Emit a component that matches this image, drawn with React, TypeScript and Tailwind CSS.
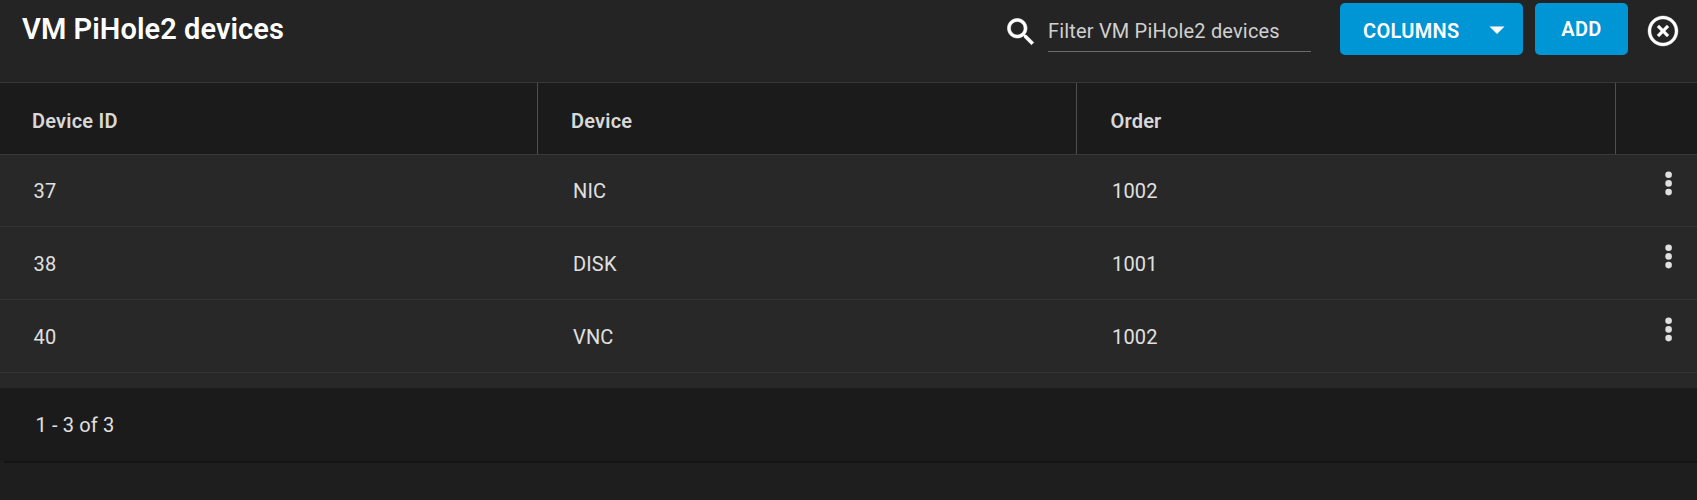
import React from 'react';

type Device = { id: string; device: string; order: string };

const devices: Device[] = [
  { id: '37', device: 'NIC', order: '1002' },
  { id: '38', device: 'DISK', order: '1001' },
  { id: '40', device: 'VNC', order: '1002' },
];

function SearchIcon() {
  return (
    <svg viewBox="0 0 24 24" className="mt-[14px] h-9 w-9 shrink-0 fill-white stroke-white stroke-[0.4]">
      <path d="M15.5 14h-.79l-.28-.27C15.41 12.59 16 11.11 16 9.5 16 5.91 13.09 3 9.5 3S3 5.91 3 9.5 5.91 16 9.5 16c1.61 0 3.09-.59 4.23-1.57l.27.28v.79l5 4.99L20.49 19l-4.99-5zm-6 0C7.01 14 5 11.99 5 9.5S7.01 5 9.5 5 14 7.01 14 9.5 11.99 14 9.5 14z" />
    </svg>
  );
}

function CloseIcon() {
  return (
    <svg viewBox="0 0 24 24" className="h-9 w-9 fill-white stroke-white stroke-[0.25]">
      <path d="M12,20C7.59,20 4,16.41 4,12C4,7.59 7.59,4 12,4C16.41,4 20,7.59 20,12C20,16.41 16.41,20 12,20M12,2C6.47,2 2,6.47 2,12C2,17.53 6.47,22 12,22C17.53,22 22,17.53 22,12C22,6.47 17.53,2 12,2M14.59,8L12,10.59L9.41,8L8,9.41L10.59,12L8,14.59L9.41,16L12,13.41L14.59,16L16,14.59L13.41,12L16,9.41L14.59,8Z" />
    </svg>
  );
}

function DotsIcon() {
  return (
    <svg viewBox="0 0 8 26" className="h-[26px] w-2 fill-[#e0e0e0]">
      <circle cx="3.6" cy="3.7" r="3.3" />
      <circle cx="3.6" cy="12.4" r="3.3" />
      <circle cx="3.6" cy="21.1" r="3.3" />
    </svg>
  );
}

function Toolbar() {
  return (
    <header className="flex h-[82px] items-start bg-[#242424]">
      <h1 className="ml-[22px] mt-[9px] flex-1 text-[29px] font-semibold leading-10 tracking-[0.06px] text-white">
        VM PiHole2 devices
      </h1>
      <SearchIcon />
      <div className="ml-[9px] mt-3 flex h-10 w-[263px] items-start border-b border-[#6b6b6b] pt-[7px]">
        <span className="whitespace-nowrap text-[20px] leading-6 tracking-[0.18px] text-[#d0d0d0]">
          Filter VM PiHole2 devices
        </span>
      </div>
      <button className="ml-[29px] mt-[3px] flex h-[52px] w-[183px] items-start rounded-[5px] bg-[#0095d5] pl-[23px] text-[20px] font-semibold text-white">
        <span className="mt-4 w-[96px] text-left leading-6 tracking-[0.3px]">COLUMNS</span>
        <svg viewBox="0 0 24 24" className="ml-[19.5px] mt-2 h-9 w-9 shrink-0 fill-current">
          <path d="M7 10.3l5 5 5-5z" />
        </svg>
      </button>
      <button className="ml-3 mt-[3px] flex h-[52px] w-[93px] justify-center rounded-[5px] bg-[#0095d5] pt-[14px] text-[20px] font-semibold leading-6 tracking-[0.3px] text-white">
        ADD
      </button>
      <button aria-label="Close" className="ml-[17px] mr-4 mt-[12.5px]">
        <CloseIcon />
      </button>
    </header>
  );
}

export default function App() {
  return (
    <div className="h-[500px] w-[1697px] overflow-hidden bg-[#1e1e1e] font-['Roboto',sans-serif]">
      <Toolbar />
      <div className="grid h-[73px] grid-cols-[538px_539px_539px_1fr] border-y border-[#383838] bg-[#1b1b1b] text-[20px] font-semibold leading-6 tracking-[0.2px] text-[#d8d8d8]">
        <div className="border-r border-[#4f4f4f] pl-8 pt-[26px]">Device ID</div>
        <div className="border-r border-[#4f4f4f] pl-[33px] pt-[26px]">Device</div>
        <div className="border-r border-[#4f4f4f] pl-[33.5px] pt-[26px]">Order</div>
        <div />
      </div>
      <div className="h-[233px] bg-[#282828] text-[20px] leading-6 text-[#e0e0e0]">
        {devices.map((d) => (
          <div
            key={d.id}
            className="grid h-[73px] grid-cols-[538px_539px_539px_1fr] border-b border-[#333333] first:h-[72px] [&>button]:mt-[17px] [&>div]:pt-[25px] [&:first-child>button]:mt-4 [&:first-child>div]:pt-6"
          >
            <div className="pl-[33.5px] tracking-[0.15px]">{d.id}</div>
            <div className="pl-[35px] tracking-[0.15px]">{d.device}</div>
            <div className="pl-[35px] tracking-[0.15px]">{d.order}</div>
            <button className="ml-[48.5px] w-2 self-start">
              <DotsIcon />
            </button>
          </div>
        ))}
      </div>
      <footer className="h-[73px] bg-[#1b1b1b] pl-[35.5px] pt-[25px] text-[20px] leading-6 tracking-[0.15px] text-[#e0e0e0]">
        1 - 3 of 3
      </footer>
      <div className="ml-1 h-0.5 bg-[#141414]" />
    </div>
  );
}
